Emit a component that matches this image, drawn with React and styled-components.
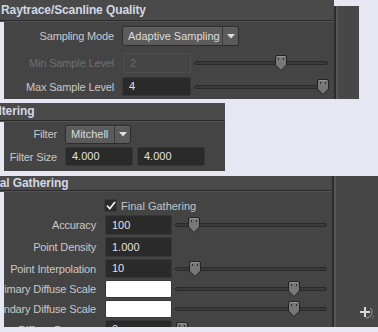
import styled, { createGlobalStyle } from "styled-components";

const Global = createGlobalStyle`
  html, body { margin: 0; padding: 0; background: #e6e7f2; }
  body { font-family: "Liberation Sans", Arial, sans-serif; }
`;

const Page = styled.div`
  width: 378px;
  height: 332px;
  overflow: hidden;
  display: flex;
  flex-direction: column;
  background: #e6e7f2;
`;

const Panel = styled.div`
  display: flex;
  width: ${(p) => p.$w}px;
  height: ${(p) => p.$h}px;
  margin-top: ${(p) => p.$top || 0}px;
  flex-shrink: 0;
`;

const Main = styled.div`
  flex: 1;
  display: flex;
  flex-direction: column;
  min-width: 0;
`;

const Header = styled.div`
  height: ${(p) => p.$h}px;
  flex-shrink: 0;
  background: #4a4a4a;
  border-bottom: 1px solid #2b2b2b;
  box-shadow: 0 1px 0 #525252;
  color: #d2d8e6;
  font-weight: bold;
  font-size: 12px;
  letter-spacing: -0.1px;
  line-height: ${(p) => p.$h}px;
  white-space: nowrap;
  overflow: hidden;
  padding-left: 1px;
  text-indent: ${(p) => p.$shift || 0}px;
`;

const Body = styled.div`
  flex: 1;
  margin-left: 4px;
  margin-top: 1px;
  background: #444444;
  overflow: hidden;
  display: flex;
  flex-direction: column;
  padding-top: ${(p) => p.$pad}px;
`;

const Side = styled.div`
  width: ${(p) => p.$w}px;
  margin-top: ${(p) => p.$top || 0}px;
  background: #474747;
  border-left: 2px solid #2c2c2c;
  box-shadow: inset 2px 0 0 #565656;
  display: flex;
  flex-direction: column;
  justify-content: flex-end;
  align-items: flex-end;
  padding: 0 3px 7px 0;
`;

const Row = styled.div`
  display: flex;
  align-items: center;
  height: ${(p) => p.$h}px;
  margin-top: ${(p) => p.$top || 0}px;
  flex-shrink: 0;
`;

const Label = styled.div`
  width: ${(p) => p.$w}px;
  flex-shrink: 0;
  display: flex;
  justify-content: flex-end;
  margin-right: ${(p) => p.$gap}px;
  white-space: nowrap;
  font-size: 11px;
  letter-spacing: -0.15px;
  color: ${(p) => (p.$dim ? "#6f6f6f" : "#c8c8c8")};
`;

const Field = styled.div`
  width: ${(p) => p.$w}px;
  height: ${(p) => p.$h}px;
  flex-shrink: 0;
  box-sizing: border-box;
  margin-right: ${(p) => p.$gap || 0}px;
  border-radius: 2px;
  border: 1px solid ${(p) => (p.$dim ? "#4e4e4e" : "#373737")};
  background: ${(p) => (p.$dim ? "#454545" : p.$white ? "#ffffff" : "#2a2a2a")};
  color: ${(p) => (p.$dim ? "#6a6a6a" : "#e2e2e2")};
  font-size: 11px;
  line-height: ${(p) => p.$h - 2}px;
  padding-left: 6px;
`;

const Drop = styled.div`
  width: ${(p) => p.$w}px;
  height: ${(p) => p.$h}px;
  box-sizing: border-box;
  display: flex;
  border: 1px solid #2c2c2c;
  border-radius: 3px;
  background: #5b5b5b;
  box-shadow: inset 0 1px 0 #666;
  color: #dcdcdc;
  font-size: 11px;
`;

const DropText = styled.div`
  flex: 1;
  padding-left: 5px;
  line-height: ${(p) => p.$h - 2}px;
  white-space: nowrap;
  overflow: hidden;
`;

const DropArrow = styled.div`
  width: 15px;
  border-left: 1px solid #3a3a3a;
  display: flex;
  align-items: center;
  justify-content: center;
`;

const Slider = styled.div`
  position: relative;
  width: ${(p) => p.$w}px;
  height: 16px;
  margin-left: 3px;
  display: flex;
  align-items: center;
`;

const Track = styled.div`
  width: 100%;
  height: 4px;
  box-sizing: border-box;
  border: 1px solid #2a2a2a;
  border-radius: 2px;
  background: #3a3a3a;
`;

const Thumb = styled.svg`
  position: absolute;
  top: 0;
  left: ${(p) => p.$x}px;
`;

const Check = styled.div`
  width: 13px;
  height: 13px;
  box-sizing: border-box;
  background: #2b2b2b;
  border: 1px solid #3a3a3a;
  border-radius: 2px;
  display: flex;
  align-items: center;
  justify-content: center;
  margin-right: 4px;
`;

const CheckText = styled.span`
  font-size: 11px;
  color: #c4c4c4;
  white-space: nowrap;
`;

const Arrow = () => (
  <svg width="8" height="5" viewBox="0 0 8 5">
    <path d="M0 0 H8 L4 4.5 Z" fill="#dedede" />
  </svg>
);

const SliderBar = ({ w, x }) => (
  <Slider $w={w}>
    <Track />
    <Thumb $x={x} width="12" height="16" viewBox="0 0 12 16">
      <path
        d="M2 0.5 H10 Q11.5 0.5 11.5 2 V10 L6 15.5 L0.5 10 V2 Q0.5 0.5 2 0.5 Z"
        fill="#777"
        stroke="#232323"
      />
      <path d="M2 1.5 H10" stroke="#959595" />
      <rect x="3" y="3" width="1" height="2" fill="#2e2e2e" />
      <rect x="8" y="3" width="1" height="2" fill="#2e2e2e" />
    </Thumb>
  </Slider>
);

const PlusIcon = () => (
  <svg width="17" height="15" viewBox="0 0 17 15">
    <path d="M7 2 V12 M2 7 H12" stroke="#d8d8d8" strokeWidth="2" />
    <path d="M12.5 3 A6 6 0 0 1 8 13" fill="none" stroke="#9a9a9a" strokeWidth="1" />
    <path d="M14 13 H16 M15.5 11 V13" stroke="#888" strokeWidth="1" strokeDasharray="1 1" />
  </svg>
);

export default function App() {
  return (
    <>
      <Global />
      <Page>
        <Panel $w={359} $h={99}>
          <Main>
            <Header $h={20}>Raytrace/Scanline Quality</Header>
            <Body $pad={4}>
              <Row $h={20}>
                <Label $w={110} $gap={8}>Sampling Mode</Label>
                <Drop $w={117} $h={20}>
                  <DropText $h={20}>Adaptive Sampling</DropText>
                  <DropArrow>
                    <Arrow />
                  </DropArrow>
                </Drop>
              </Row>
              <Row $h={20} $top={7}>
                <Label $w={110} $gap={9} $dim>Min Sample Level</Label>
                <Field $w={68} $h={20} $dim>2</Field>
                <SliderBar w={134} x={81} />
              </Row>
              <Row $h={19} $top={4}>
                <Label $w={110} $gap={8}>Max Sample Level</Label>
                <Field $w={69} $h={19}>4</Field>
                <SliderBar w={134} x={123} />
              </Row>
            </Body>
          </Main>
          <Side $w={20} $top={6} />
        </Panel>

        <Panel $w={225} $h={68} $top={4}>
          <Main>
            <Header $h={17} $shift={-13}>Filtering</Header>
            <Body $pad={3}>
              <Row $h={18}>
                <Label $w={53} $gap={8}>Filter</Label>
                <Drop $w={66} $h={19}>
                  <DropText $h={19}>Mitchell</DropText>
                  <DropArrow>
                    <Arrow />
                  </DropArrow>
                </Drop>
              </Row>
              <Row $h={19} $top={4}>
                <Label $w={53} $gap={8}>Filter Size</Label>
                <Field $w={68} $h={19} $gap={4}>4.000</Field>
                <Field $w={68} $h={19}>4.000</Field>
              </Row>
            </Body>
          </Main>
        </Panel>

        <Panel $w={378} $h={151} $top={5}>
          <Main>
            <Header $h={14} $shift={-19}>Final Gathering</Header>
            <Body $pad={6}>
              <Row $h={15}>
                <Label $w={92} $gap={8} />
                <Check>
                  <svg width="10" height="9" viewBox="0 0 10 9">
                    <path d="M1 4.5 L3.8 7.5 L9 1" fill="none" stroke="#f0f0f0" strokeWidth="1.8" />
                  </svg>
                </Check>
                <CheckText>Final Gathering</CheckText>
              </Row>
              <Row $h={20} $top={2}>
                <Label $w={92} $gap={9}>Accuracy</Label>
                <Field $w={67} $h={20}>100</Field>
                <SliderBar w={152} x={13} />
              </Row>
              <Row $h={20} $top={2}>
                <Label $w={92} $gap={9}>Point Density</Label>
                <Field $w={67} $h={20}>1.000</Field>
              </Row>
              <Row $h={19} $top={2}>
                <Label $w={92} $gap={9}>Point Interpolation</Label>
                <Field $w={67} $h={19}>10</Field>
                <SliderBar w={152} x={14} />
              </Row>
              <Row $h={18} $top={2}>
                <Label $w={92} $gap={9}>Primary Diffuse Scale</Label>
                <Field $w={67} $h={18} $white />
                <SliderBar w={152} x={113} />
              </Row>
              <Row $h={18} $top={2}>
                <Label $w={92} $gap={9}>Secondary Diffuse Scale</Label>
                <Field $w={67} $h={18} $white />
                <SliderBar w={152} x={113} />
              </Row>
              <Row $h={19} $top={2}>
                <Label $w={92} $gap={9}>Secondary Diffuse Bounces</Label>
                <Field $w={67} $h={19}>0</Field>
                <SliderBar w={152} x={1} />
              </Row>
            </Body>
          </Main>
          <Side $w={41}>
            <PlusIcon />
          </Side>
        </Panel>
      </Page>
    </>
  );
}
